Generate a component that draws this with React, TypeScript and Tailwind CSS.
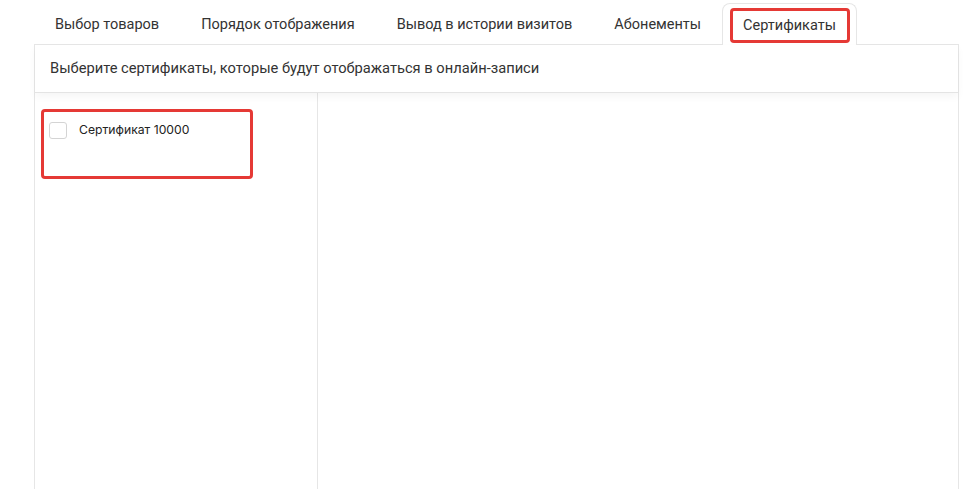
const tabs = ['Выбор товаров', 'Порядок отображения', 'Вывод в истории визитов', 'Абонементы', 'Сертификаты']

function Tabs({ active }: { active: number }) {
  return (
    <div className="flex h-[44px] items-end">
      {tabs.map((t, i) =>
        i === active ? (
          <div
            key={t}
            className="relative -mb-px flex h-[42px] items-center rounded-t-[8px] border border-b-0 border-[#e6e6e6] bg-white px-[20px] pt-[3px] text-[14.5px] text-[#333]"
          >
            {t}
            <span className="pointer-events-none absolute left-[7px] right-[6px] top-[4px] bottom-[2px] rounded-[4px] border-[3px] border-[#e53935]" />
          </div>
        ) : (
          <div key={t} className="flex h-[44px] items-center px-[21px] pt-[5px] text-[14.5px] text-[#333]">
            {t}
          </div>
        )
      )}
    </div>
  )
}

function CertificateItem({ name }: { name: string }) {
  return (
    <div className="relative ml-[6px] mt-[16px] h-[70px] w-[212px]">
      <div className="flex items-center gap-[12px] px-[8px] pt-[12px]">
        <span className="h-[17px] w-[18px] rounded-[3px] border border-[#d4d4d4] bg-white" />
        <span className="font-['Inter',sans-serif] text-[12.2px] text-[#222]">{name}</span>
      </div>
      <span className="pointer-events-none absolute inset-0 rounded-[4px] border-[3px] border-[#e53935]" />
    </div>
  )
}

export default function App() {
  return (
    <div className="h-[489px] overflow-hidden bg-white pl-[34px] pr-[16px] font-['Roboto',sans-serif]">
      <Tabs active={4} />
      <div className="flex h-[445px] flex-col border-l border-r border-t border-[#e6e6e6]">
        <div className="relative flex h-[48px] items-center border-b border-[#e4e4e4] px-[15px] text-[14.7px] text-[#333] shadow-[0_4px_8px_rgba(0,0,0,0.04)]">
          Выберите сертификаты, которые будут отображаться в онлайн-записи
        </div>
        <div className="flex flex-1">
          <div className="w-[283px] border-r border-[#e6e6e6]">
            <CertificateItem name="Сертификат 10000" />
          </div>
          <div className="flex-1" />
        </div>
      </div>
    </div>
  )
}
